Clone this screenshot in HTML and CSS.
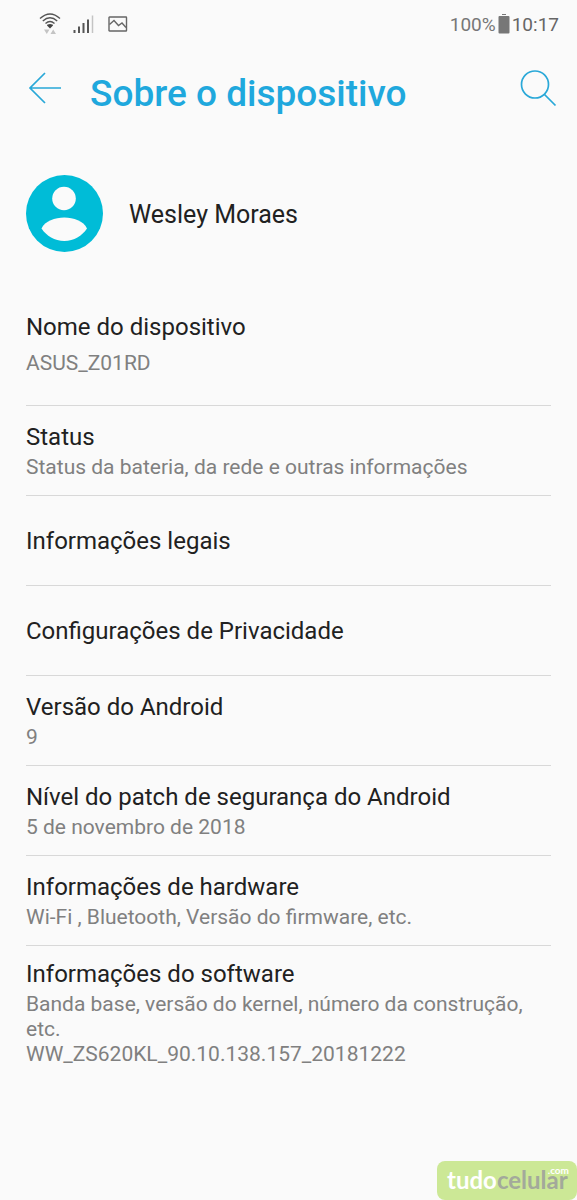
FILE: index.html
```html
<!DOCTYPE html>
<html lang="pt-BR">
<head>
<meta charset="utf-8">
<meta name="viewport" content="width=device-width, initial-scale=1">
<title>Sobre o dispositivo</title>
<link rel="stylesheet" href="styles.css">
</head>
<body>
<div class="screen">
  <div class="statusbar">
    <svg class="wifi" width="22" height="24" viewBox="0 0 22 24" aria-hidden="true">
      <g fill="none" stroke="#555" stroke-width="1.4">
        <path d="M1 6.500Q11-2.500 21 6.500"/>
        <path d="M3.800 9Q11 2.500 18.200 9"/>
        <path d="M6.500 11.500Q11 7.500 15.500 11.500"/>
      </g>
      <path d="M8 13.500Q8 12 11 12T14 13.500L11 16.500Z" fill="#444"/>
      <path d="M5 17.500h5.500L7.800 22zM11.500 22h5.500l-2.800-4.500z" fill="#c4c4c4"/>
    </svg>
    <svg class="signal" width="21" height="19" viewBox="0 0 21 19" aria-hidden="true">
      <path d="M1.500 18v-3M6 18v-6.500M10.500 18V8M15 18V4.500" stroke="#555" stroke-width="2"/>
      <path d="M19.500 18V0.500" stroke="#c4c4c4" stroke-width="1.500"/>
    </svg>
    <svg class="picture" width="20" height="16" viewBox="0 0 20 16" fill="none" stroke="#666" stroke-width="1.400" aria-hidden="true">
      <rect x="1" y="1" width="17.500" height="14" rx="0.500"/>
      <path d="M1.500 8.500 6 4.500l4.500 5L14 7l4 4.500"/>
    </svg>
    <span class="percent">100%</span>
    <svg class="battery" width="12" height="20" viewBox="0 0 12 20" fill="#777" aria-hidden="true">
      <path d="M4 0h4v1H4z"/><rect x="0.500" y="2" width="11" height="17.500" rx="1"/>
    </svg>
    <time class="clock">10:17</time>
  </div>

  <header class="header">
    <button class="icon-button" aria-label="Voltar">
      <svg width="34" height="34" viewBox="0 0 34 34" fill="none" stroke="#29a8d8" stroke-width="1.700"><path d="M17 2 2 17l15 15M2 17h31"/></svg>
    </button>
    <h1 class="title">Sobre o dispositivo</h1>
    <button class="icon-button" aria-label="Pesquisar">
      <svg width="38" height="38" viewBox="0 0 38 38" fill="none" stroke="#29a8d8" stroke-width="1.700"><circle cx="16" cy="15.500" r="13.500"/><path d="m25.500 25.500 11 11"/></svg>
    </button>
  </header>

  <main class="content">
    <a class="profile" href="#conta">
      <svg width="77" height="77" viewBox="0 0 77 77" aria-hidden="true">
        <circle cx="38.500" cy="38.500" r="38.500" fill="#00bcd7"/>
        <circle cx="38" cy="23.500" r="11.800" fill="#fafafa"/>
        <path d="M15.500 53.500C19 46 29 42.500 38.300 42.500S57.500 46 61 53.500C56 61 48 66 38.300 66S20.500 61 15.500 53.500Z" fill="#fafafa"/>
      </svg>
      <span class="name">Wesley Moraes</span>
    </a>
    <ul class="list">
      <li><a class="row device" href="#nome"><span class="label">Nome do dispositivo</span><span class="summary">ASUS_Z01RD</span></a></li>
      <li><a class="row" href="#status"><span class="label">Status</span><span class="summary">Status da bateria, da rede e outras informações</span></a></li>
      <li><a class="row" href="#legais"><span class="label">Informações legais</span></a></li>
      <li><a class="row" href="#privacidade"><span class="label">Configurações de Privacidade</span></a></li>
      <li><a class="row" href="#versao"><span class="label">Versão do Android</span><span class="summary">9</span></a></li>
      <li><a class="row" href="#patch"><span class="label">Nível do patch de segurança do Android</span><span class="summary">5 de novembro de 2018</span></a></li>
      <li><a class="row" href="#hardware"><span class="label">Informações de hardware</span><span class="summary">Wi-Fi , Bluetooth, Versão do firmware, etc.</span></a></li>
      <li><a class="row software" href="#software"><span class="label">Informações do software</span><span class="summary">Banda base, versão do kernel, número da construção, etc.<br>WW_ZS620KL_90.10.138.157_20181222</span></a></li>
    </ul>
  </main>
  <div class="watermark"><span class="tudo">tudo</span><span class="celular">celular</span><span class="com">.com</span></div>
</div>
</body>
</html>
```
FILE: styles.css
```css
* { box-sizing: border-box; }
body {
  margin: 0;
  background: #fafafa;
  color: #212121;
  font-family: Roboto, "Liberation Sans", sans-serif;
}
.screen {
  position: relative;
  min-height: 100vh;
  overflow: hidden;
}
a { color: inherit; text-decoration: none; }
.statusbar {
  display: flex;
  align-items: center;
  height: 48px;
  padding: 0 18px 0 39px;
  font-size: 19px;
  color: #666;
}
.signal { margin-left: 12px; }
.picture { margin-left: 14px; }
.percent { margin-left: auto; color: #777; }
.battery { margin: 0 2px; }
.header {
  display: flex;
  align-items: center;
  height: 84px;
  padding: 0 20px 0 28px;
}
.icon-button {
  display: flex;
  margin: 0 0 4px;
  padding: 0;
  border: 0;
  background: none;
}
.title {
  flex: 1;
  margin: 8px 0 0 28px;
  font-size: 37px;
  line-height: 44px;
  font-weight: 500;
  color: #1fa8dd;
}
.content { padding: 43px 26px 0; }
.profile {
  display: flex;
  align-items: center;
  gap: 26px;
}
.name { padding-top: 2px; font-size: 25px; line-height: 32px; }
.list {
  margin: 44px 0 0;
  padding: 0;
  list-style: none;
}
.list li + li { border-top: 1px solid #d8d8d8; }
.row {
  display: flex;
  flex-direction: column;
  justify-content: center;
  gap: 2px;
  min-height: 89px;
}
.label { font-size: 24px; line-height: 32px; }
.summary { font-size: 21px; line-height: 25px; color: #808080; }
.device {
  gap: 8px;
  min-height: 109px;
  padding-bottom: 14px;
}
.software { padding: 12px 0; }
.watermark {
  position: absolute;
  right: 0;
  bottom: 0;
  width: 140px;
  height: 39px;
  padding-left: 10px;
  border-radius: 8px;
  background: #cce896;
  font: 700 24px/38px Lato, sans-serif;
}
.tudo { color: #fff; }
.celular { color: #a3a99b; }
.com {
  position: absolute;
  top: 3px;
  right: 8px;
  color: #fff;
  font-size: 10px;
  line-height: 12px;
}
```
